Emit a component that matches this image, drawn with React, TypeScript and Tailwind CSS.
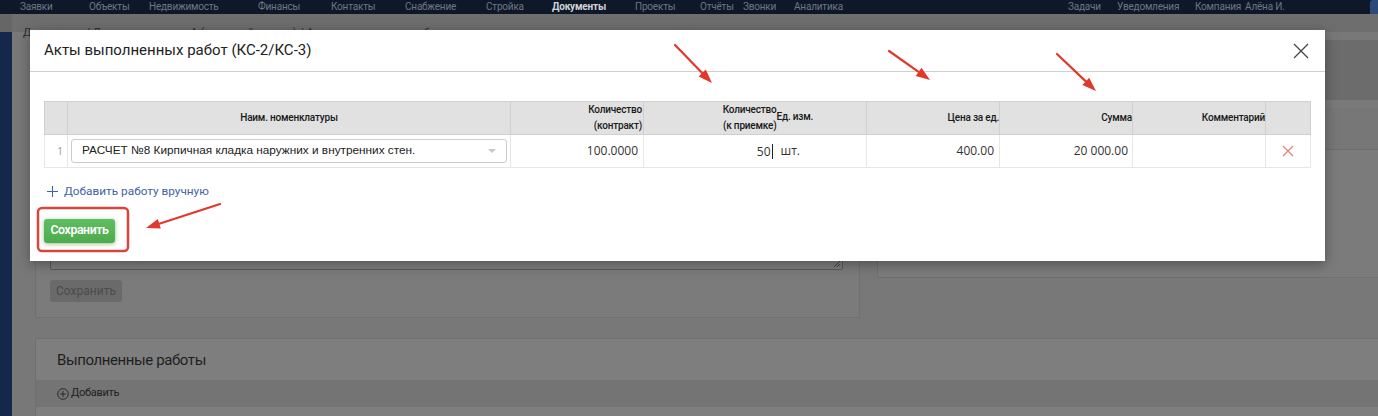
import React from "react";

const navLeft = [
  ["Заявки", 20],
  ["Объекты", 89],
  ["Недвижимость", 149],
  ["Финансы", 258],
  ["Контакты", 331],
  ["Снабжение", 405],
  ["Стройка", 486],
  ["Документы", 552],
  ["Проекты", 635],
  ["Отчёты", 700],
  ["Звонки", 743],
  ["Аналитика", 794],
  ["Задачи", 1068],
  ["Уведомления", 1117],
  ["Компания", 1195],
  ["Алёна И.", 1245],
] as const;

function Arrows() {
  const arrows = [
    { s: [675, 45], b: [702.2, 73.0], p: "698.6,76.5 712,83 705.8,69.5" },
    { s: [889, 51], b: [918.6, 71.9], p: "915.7,76.0 930,80 921.5,67.8" },
    { s: [1057, 54], b: [1085.8, 81.4], p: "1082.4,85.0 1096,91 1089.2,77.8" },
    { s: [220, 204], b: [159.3, 223.7], p: "157.8,218.9 146,228 160.8,228.5" },
  ];
  return (
    <svg
      className="pointer-events-none absolute left-0 top-0"
      width={1378}
      height={416}
      viewBox="0 0 1378 416"
    >
      {arrows.map((a, i) => (
        <g key={i}>
          <line
            x1={a.s[0]}
            y1={a.s[1]}
            x2={a.b[0]}
            y2={a.b[1]}
            stroke="#e0392b"
            strokeWidth={2.2}
            strokeLinecap="round"
          />
          <polygon points={a.p} fill="#e0392b" />
        </g>
      ))}
      <rect
        x={38}
        y={208}
        width={90}
        height={43}
        rx={4}
        fill="none"
        stroke="#d9453a"
        strokeWidth={2.5}
      />
    </svg>
  );
}

function Modal() {
  return (
    <div className="absolute left-[30px] top-[30px] flex h-[231px] w-[1295px] flex-col bg-white shadow-[0_3px_12px_rgba(0,0,0,0.35)]">
      <div className="flex h-[42px] shrink-0 items-center justify-between border-b border-[#cfcfcf] pl-[14px] pr-[16px]">
        <div className="font-['Roboto',sans-serif] text-[15px] text-[#222]">
          Акты выполненных работ (КС-2/КС-3)
        </div>
        <svg width="16" height="16" viewBox="0 0 16 16" className="mt-[1px]">
          <path d="M1 1L15 15M15 1L1 15" stroke="#444" strokeWidth="1.3" />
        </svg>
      </div>
      <div className="flex flex-col pl-[14px] pt-[29px]">
        <table className="w-[1266px] table-fixed border-collapse border border-[#d4d4d4] font-['Roboto',sans-serif]">
          <colgroup>
            <col className="w-[23px]" />
            <col className="w-[443px]" />
            <col className="w-[133px]" />
            <col className="w-[133px]" />
            <col className="w-[90px]" />
            <col className="w-[133px]" />
            <col className="w-[133px]" />
            <col className="w-[133px]" />
            <col className="w-[45px]" />
          </colgroup>
          <thead>
            <tr className="h-[33px] bg-[#e1e1e1] text-[10px] font-medium leading-[16px] tracking-[-0.2px] text-[#1a1a1a]">
              <th className="border border-[#d0d0d0]"></th>
              <th className="border border-[#d0d0d0] text-center font-medium">
                Наим. номенклатуры
              </th>
              <th className="border border-[#d0d0d0] pr-[1px] text-right font-medium">
                Количество
                <br />
                (контракт)
              </th>
              <th className="border-y border-l border-[#d0d0d0] pr-0 text-right font-medium">
                Количество
                <br />
                (к приемке)
              </th>
              <th className="border-y border-r border-[#d0d0d0] pb-[2px] text-left align-middle font-medium">
                Ед. изм.
              </th>
              <th className="border border-[#d0d0d0] pr-0 text-right font-medium">
                Цена за ед.
              </th>
              <th className="border border-[#d0d0d0] pr-0 text-right font-medium">
                Сумма
              </th>
              <th className="border border-[#d0d0d0] pr-0 text-right font-medium">
                Комментарий
              </th>
              <th className="border border-[#d0d0d0]"></th>
            </tr>
          </thead>
          <tbody>
            <tr className="h-[33px] text-[12px] text-[#333]">
              <td className="border border-[#e6e6e6] pr-[4px] text-right font-['Open_Sans',sans-serif] text-[10px] text-[#999]">
                1
              </td>
              <td className="border border-[#e6e6e6] px-[3px]">
                <div className="flex h-[24px] items-center justify-between rounded-[3px] border border-[#cccccc] pl-[10px] pr-[10px]">
                  <span className="font-['Liberation_Sans',Arial,sans-serif] text-[11.8px] text-[#222]">
                    РАСЧЕТ №8 Кирпичная кладка наружних и внутренних стен.
                  </span>
                  <svg width="8" height="4" viewBox="0 0 8 4">
                    <path d="M0 0L8 0L4 4Z" fill="#c8c8c8" />
                  </svg>
                </div>
              </td>
              <td className="border border-[#e6e6e6] pr-[5px] text-right font-['Open_Sans',sans-serif]">
                100.0000
              </td>
              <td className="border-y border-l border-[#e6e6e6] pr-[4px] text-right font-['Open_Sans',sans-serif]">
                50<span className="ml-[1px] inline-block h-[15px] w-[1px] translate-y-[3px] bg-[#222]"></span>
              </td>
              <td className="border-y border-r border-[#e6e6e6] pl-[4px] text-left font-['Open_Sans',sans-serif]">
                шт.
              </td>
              <td className="border border-[#e6e6e6] pr-[5px] text-right font-['Open_Sans',sans-serif]">
                400.00
              </td>
              <td className="border border-[#e6e6e6] pr-[4px] text-right font-['Open_Sans',sans-serif]">
                20 000.00
              </td>
              <td className="border border-[#e6e6e6]"></td>
              <td className="border border-[#e6e6e6]">
                <div className="flex justify-center">
                  <svg width="12" height="12" viewBox="0 0 12 12">
                    <path d="M1 1L11 11M11 1L1 11" stroke="#e77f7a" strokeWidth="1.2" />
                  </svg>
                </div>
              </td>
            </tr>
          </tbody>
        </table>
        <div className="mt-[15px] flex items-center gap-[6px] pl-[3px] font-['Roboto',sans-serif] text-[11.8px] text-[#3f63a8]">
          <svg width="11" height="11" viewBox="0 0 11 11">
            <path d="M5.5 0V11M0 5.5H11" stroke="#3f63a8" strokeWidth="1.1" />
          </svg>
          <span>Добавить работу вручную</span>
        </div>
        <div className="mt-[18px]">
          <button className="flex h-[24px] w-[71px] items-center justify-center rounded-[3px] bg-gradient-to-b from-[#62bd62] to-[#4cab4c] font-['Roboto',sans-serif] text-[12.3px] font-semibold tracking-[-0.4px] text-white shadow-[0_1px_4px_rgba(60,140,60,0.55)]">
            Сохранить
          </button>
        </div>
      </div>
    </div>
  );
}

export default function App() {
  return (
    <div className="relative h-[416px] w-[1378px] overflow-hidden bg-[#787878] font-['Roboto',sans-serif]">
      {/* top nav */}
      <div className="relative h-[14px] bg-[#0e1828] text-[10px] leading-[14px] tracking-[-0.2px] text-[#6f7785]">
        {navLeft.map(([t, x]) => (
          <span
            key={t}
            className={
              "absolute top-0 " +
              (t === "Документы" ? "font-bold text-[#d0d3d8]" : "")
            }
            style={{ left: x }}
          >
            {t}
          </span>
        ))}
        <div className="absolute right-0 top-0 h-[14px] w-[8px] rounded-tl-[3px] bg-[#2a4a78]"></div>
      </div>
      {/* breadcrumb */}
      <div className="flex h-[18px] bg-[#6e6e6e]">
        <div className="w-[12px] bg-[#666]"></div>
        <div className="pl-[11px] pt-[12px] text-[11px] leading-[14px] text-[#2a2a2a]">
          Документы / Договор поставки А (основной проект) / Акты выполненных работ
        </div>
      </div>
      {/* content */}
      <div className="flex h-[384px]">
        <div className="w-[12px] shrink-0 bg-[#13284a]"></div>
        <div className="flex flex-1 flex-col pl-[23px] pt-[8px]">
          <div className="flex">
            <div className="flex h-[278px] w-[825px] flex-col justify-end border border-[#707070] bg-[#7b7b7b] pb-[15px] pl-[14px] pr-[16px]">
              <div className="relative h-[100px] rounded-[2px] border border-[#5a5a5a] bg-[#7e7e7e]">
                <svg className="absolute bottom-[1px] right-[1px]" width="8" height="8" viewBox="0 0 8 8">
                  <path d="M1 7L7 1M4 7L7 4" stroke="#333" strokeWidth="0.8" />
                </svg>
              </div>
              <div className="mt-[10px] flex h-[22px] w-[72px] items-center justify-center rounded-[3px] bg-[#6a6a6a] text-[12px] text-[#4a4a4a]">
                Сохранить
              </div>
            </div>
            <div className="ml-[17px] flex h-[238px] flex-1 flex-col border-l border-b border-[#707070] bg-[#7b7b7b]">
              <div className="h-[60px] bg-[#6c6c6c]"></div>
              <div className="h-[8px] bg-[#7a7a7a]"></div>
              <div className="h-[42px] border-b border-[#6e6e6e] bg-[#777]"></div>
              <div className="flex-1"></div>
            </div>
          </div>
          <div className="mt-[20px] flex flex-1 flex-col border-l border-t border-[#707070] bg-[#7e7e7e]">
            <div className="flex h-[41px] items-center pl-[21px] pt-[2px] text-[15px] tracking-[-0.4px] text-[#1e1e1e]">
              Выполненные работы
            </div>
            <div className="flex h-[27px] items-center gap-[2px] bg-[#747474] pl-[21px] text-[11px] tracking-[-0.3px] text-[#1e1e1e]">
              <svg width="12" height="12" viewBox="0 0 12 12">
                <circle cx="6" cy="6" r="5.3" fill="none" stroke="#222" strokeWidth="0.9" />
                <path d="M6 3V9M3 6H9" stroke="#222" strokeWidth="0.9" />
              </svg>
              <span>Добавить</span>
            </div>
          </div>
        </div>
      </div>
      <Modal />
      <Arrows />
    </div>
  );
}
